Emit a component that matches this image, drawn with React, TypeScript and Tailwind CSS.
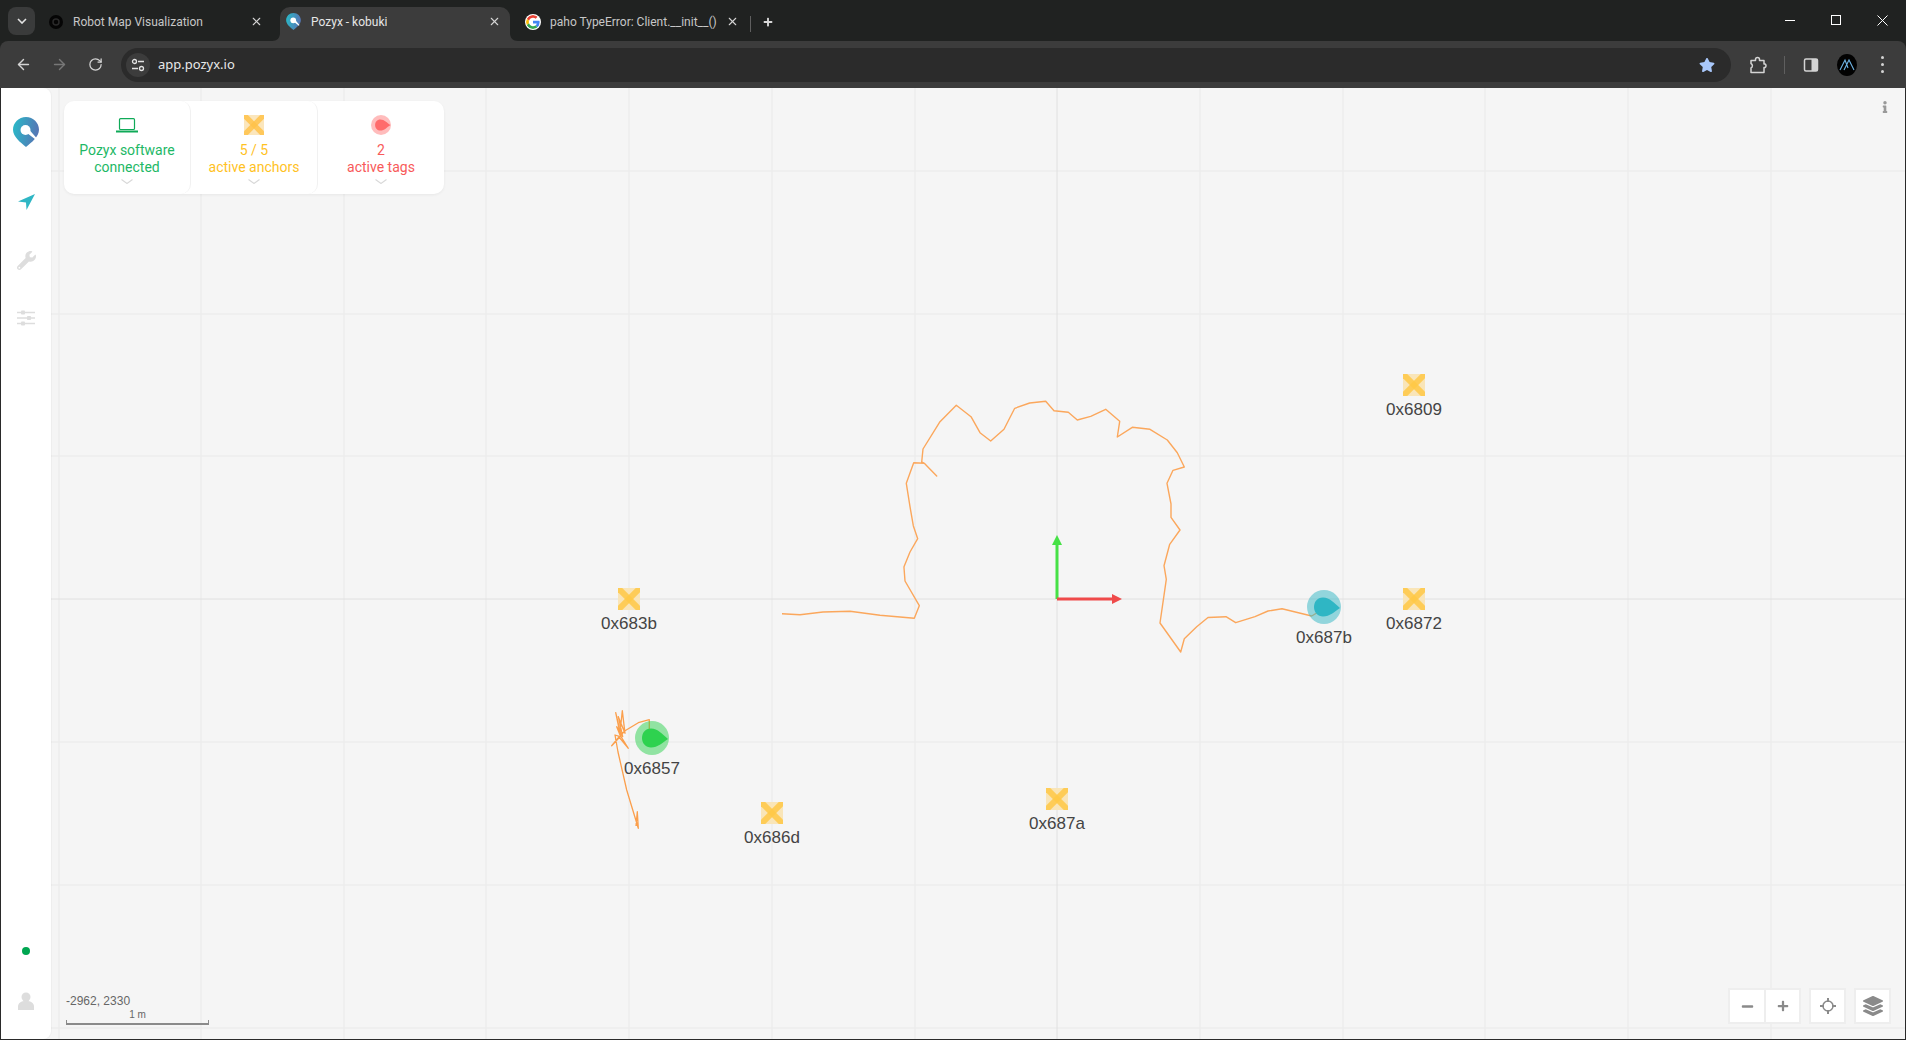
import React from 'react';
import { ArrowLeft, ArrowRight, RotateCw, X } from 'lucide-react';
import { FaInfo, FaLayerGroup, FaMinus, FaPlus, FaStar, FaWrench } from 'react-icons/fa';

const GRID_X = [59, 201, 344, 486, 629, 772, 915, 1200, 1343, 1485, 1628, 1771];
const GRID_Y = [171, 314, 456, 742, 885, 1028];

const ANCHORS = [
  { id: '0x6809', x: 1414, y: 385 },
  { id: '0x6872', x: 1414, y: 599 },
  { id: '0x683b', x: 629, y: 599 },
  { id: '0x686d', x: 772, y: 813 },
  { id: '0x687a', x: 1057, y: 799 },
];

const TAGS = [
  { id: '0x687b', x: 1324, y: 607, color: '#2fb6c4' },
  { id: '0x6857', x: 652, y: 738, color: '#2ed24f' },
];

const TRAIL_A =
  '782,613.7 800,614.7 823,612 850,611.3 880,615.3 914.3,618.3 919.3,605.7 905,581 904,567.7 904,566.7 910,552 917.7,538.7 913.3,525.7 910,506.7 906.3,483.3 913.7,462.7 924.3,463.3 936.7,476 924.3,463.3 921.7,462 923,449 940,421.7 956.3,405.3 971,416.7 980,432.7 990.7,441 1004,429.3 1014.7,408.3 1029.7,403 1045.7,401.3 1054,410.7 1068.3,412.3 1077.3,420 1090.7,416.3 1105.7,409.3 1119.7,421.3 1117.3,437 1132.3,427.3 1150,429.3 1167.3,440 1177.3,452.7 1184.3,467 1173,470.3 1167,483.3 1171,504 1171,517.3 1180,530 1169.7,544.3 1164,565.7 1166.3,579.3 1160,623 1180.7,652 1184.3,638.7 1196.7,626.7 1208,617.5 1226,616.7 1235.7,622.7 1255,616.7 1268,611 1282,608.7 1311.7,616 1316.7,613';

const TRAIL_B =
  '649.3,730 649.3,719.7 638.3,722.7 625,730.7 621,735 615.7,712.7 620,733.3 622.3,710.7 625,733.3 618.3,716.7 622.7,736.7 616.7,726.7 620,735 628.3,748.3 619,737 611.7,745.7 620,736.7 615,735 618,752 626.7,790 638.3,828.3 637.3,811.7 636,826';

function PozyxLogo({ className }: { className?: string }) {
  return (
    <svg viewBox="0 0 26 30" className={className}>
      <defs>
        <linearGradient id="pozyxGrad" x1="0" y1="0" x2="1" y2="0.2">
          <stop offset="0" stopColor="#27bcc9" />
          <stop offset="1" stopColor="#5577b5" />
        </linearGradient>
      </defs>
      <path d="M13 0C5.8 0 0 5.7 0 12.8c0 7 7.500 12.700 13 17.200 5.500-4.500 13-10.200 13-17.200C26 5.700 20.200 0 13 0Z" fill="url(#pozyxGrad)" />
      <circle cx="12.500" cy="13" r="5" fill="#fff" />
      <path d="M14 16l8.500 6.500 1-1.500-7-8Z" fill="#fff" />
    </svg>
  );
}

function GoogleIcon() {
  return (
    <svg viewBox="0 0 48 48" className="h-4 w-4 rounded-full bg-white p-[1px]">
      <path fill="#EA4335" d="M24 9.5c3.5 0 6.700 1.300 9.100 3.500l6.800-6.800C35.800 2.400 30.200 0 24 0 14.600 0 6.500 5.400 2.600 13.200l7.900 6.200C12.400 13.600 17.700 9.500 24 9.500z" />
      <path fill="#4285F4" d="M46.900 24.500c0-1.600-.1-3.100-.4-4.500H24v9h12.900c-.6 3-2.200 5.500-4.700 7.200l7.700 6c4.500-4.200 7-10.300 7-17.700z" />
      <path fill="#FBBC05" d="M10.500 28.600c-.5-1.400-.8-3-.8-4.600s.3-3.200.8-4.600l-7.900-6.200C.9 16.500 0 20.100 0 24s.9 7.500 2.600 10.800l7.900-6.200z" />
      <path fill="#34A853" d="M24 48c6.500 0 11.900-2.100 15.900-5.800l-7.700-6c-2.200 1.400-4.900 2.300-8.200 2.300-6.300 0-11.600-4.100-13.500-9.900l-7.900 6.200C6.500 42.600 14.600 48 24 48z" />
    </svg>
  );
}

function Tab({
  title,
  icon,
  className,
  textClass,
}: {
  title: string;
  icon: React.ReactNode;
  className: string;
  textClass: string;
}) {
  return (
    <div className={`flex h-[34px] shrink-0 items-center pb-[5px] font-['Roboto',sans-serif] text-[12px] ${className}`}>
      {icon}
      <span className={`overflow-hidden whitespace-nowrap ${textClass}`}>{title}</span>
      <X size={13} strokeWidth={2} className="ml-auto text-[#d5d5d5]" />
    </div>
  );
}

function ChromeBar() {
  return (
    <div className="shrink-0 bg-[#202221]">
      <div className="flex h-[41px] items-end pl-2">
        <div className="mb-[6px] flex h-[28px] w-[27px] items-center justify-center rounded-lg bg-[#3a3b3b]">
          <svg viewBox="0 0 10 6" className="h-[6px] w-[10px]">
            <path d="M1 1l4 4 4-4" fill="none" stroke="#e3e3e3" strokeWidth="1.600" />
          </svg>
        </div>
        <Tab
          title="Robot Map Visualization"
          className="w-[245px] pl-[13px] pr-[17px]"
          textClass="ml-[9px] text-[#c7c7c7]"
          icon={
            <svg viewBox="0 0 16 16" className="h-4 w-4">
              <circle cx="8" cy="8" r="7" fill="#050505" />
              <circle cx="8" cy="8" r="3" fill="none" stroke="#2a2a2a" strokeWidth="1.500" />
            </svg>
          }
        />
        <div className="relative">
          <svg viewBox="0 0 8 8" className="absolute bottom-0 -left-2 h-2 w-2">
            <path d="M8 0v8H0c5 0 8-3 8-8Z" fill="#3c3c3c" />
          </svg>
          <svg viewBox="0 0 8 8" className="absolute bottom-0 -right-2 h-2 w-2">
            <path d="M0 0v8h8C3 8 0 5 0 0Z" fill="#3c3c3c" />
          </svg>
          <Tab
            title="Pozyx - kobuki"
            className="w-[230px] rounded-t-[10px] bg-[#3c3c3c] pl-[6px] pr-[9px]"
            textClass="ml-[10px] text-[#e6e6e6]"
            icon={<PozyxLogo className="h-[17px] w-[15px]" />}
          />
        </div>
        <Tab
          title="paho TypeError: Client.__init__()"
          className="w-[240px] pl-[15px] pr-[11px]"
          textClass="ml-[9px] text-[#c7c7c7]"
          icon={<GoogleIcon />}
        />
        <div className="mb-[9px] h-[16px] w-px bg-[#5f5f5f]" />
        <div className="mb-[12px] ml-[11px] flex h-[14px] w-[12px] items-center justify-center">
          <FaPlus size={10} className="text-[#d8d8d8]" />
        </div>
        <div className="ml-auto flex h-[41px] items-start pr-px text-white">
          <div className="flex h-[40px] w-[46px] items-center justify-center">
            <div className="h-px w-[10px] bg-white" />
          </div>
          <div className="flex h-[40px] w-[46px] items-center justify-center">
            <div className="h-[10px] w-[10px] border border-white" />
          </div>
          <div className="flex h-[40px] w-[46px] items-center justify-center">
            <svg viewBox="0 0 11 11" className="h-[11px] w-[11px]">
              <path d="M.5.5l10 10M10.500.5l-10 10" stroke="#fff" strokeWidth="1" />
            </svg>
          </div>
        </div>
      </div>
      <div className="flex h-[47px] items-center rounded-t-[8px] bg-[#3c3c3c] pl-[5px] pr-[21px]">
        <div className="flex w-[36px] justify-center">
          <ArrowLeft size={17} className="text-[#d4d4d4]" />
        </div>
        <div className="flex w-[36px] justify-center">
          <ArrowRight size={17} className="text-[#777]" />
        </div>
        <div className="flex w-[36px] justify-center">
          <RotateCw size={15} className="text-[#d4d4d4]" />
        </div>
        <div className="ml-2 flex h-[34px] flex-1 items-center rounded-full bg-[#2b2b2b] pl-[5px] pr-4">
          <div className="flex h-[24px] w-[24px] items-center justify-center rounded-full bg-[#3c3c3c]">
            <svg viewBox="0 0 14 14" className="h-[14px] w-[14px]">
              <circle cx="3.500" cy="3.500" r="2" fill="none" stroke="#e3e3e3" strokeWidth="1.300" />
              <path d="M7 3.500h6M1 10.500h6" stroke="#e3e3e3" strokeWidth="1.300" />
              <circle cx="10.500" cy="10.500" r="2" fill="none" stroke="#e3e3e3" strokeWidth="1.300" />
            </svg>
          </div>
          <span className="ml-2 font-['Noto_Sans',sans-serif] text-[13px] text-[#e8e8e8]">app.pozyx.io</span>
          <FaStar size={16} className="ml-auto text-[#a8c7fa]" />
        </div>
        <div className="flex w-[53px] justify-center">
          <svg viewBox="0 0 18 18" className="h-[18px] w-[18px]">
            <path
              d="M2 4.500h4.500V3.500a2 2 0 0 1 4 0v1H15v3.500h1a2 2 0 0 1 0 3.500h-1v5H2v-4.500a2.500 2.500 0 0 0 0-4.500Z"
              fill="none"
              stroke="#d4d4d4"
              strokeWidth="1.500"
              strokeLinejoin="round"
            />
          </svg>
        </div>
        <div className="h-[18px] w-px bg-[#5f5f5f]" />
        <div className="flex w-[52px] justify-center">
          <svg viewBox="0 0 16 16" className="h-4 w-4">
            <rect x="1.500" y="2" width="13" height="12" rx="1.500" fill="none" stroke="#d4d4d4" strokeWidth="1.500" />
            <rect x="8.500" y="2" width="6" height="12" fill="#d4d4d4" />
          </svg>
        </div>
        <svg viewBox="0 0 20 22" className="h-[22px] w-[20px]">
          <ellipse cx="10" cy="11" rx="10" ry="11" fill="#020202" />
          <path d="M3 16L8 6l3 8M7 16l5-10 5 10" fill="none" stroke="#6fb6e8" strokeWidth="1.100" />
        </svg>
        <div className="ml-6 flex w-1 flex-col gap-[4px]">
          <div className="h-[3px] w-[3px] rounded-full bg-[#d4d4d4]" />
          <div className="h-[3px] w-[3px] rounded-full bg-[#d4d4d4]" />
          <div className="h-[3px] w-[3px] rounded-full bg-[#d4d4d4]" />
        </div>
      </div>
    </div>
  );
}

function Sidebar() {
  return (
    <div className="z-10 flex w-[50px] shrink-0 flex-col items-center rounded-r-lg bg-white pb-[29px] pt-[29px] shadow-[1px_0_1px_rgba(0,0,0,0.03)]">
      <PozyxLogo className="mb-[26px] h-[30px] w-[26px]" />
      <div className="flex h-[58px] items-center">
        <svg viewBox="0 0 17 16" className="h-4 w-[17px]">
          <path d="M17 0L8.500 16 8 8.500 0 7.500Z" fill="#2fb6c4" />
        </svg>
      </div>
      <div className="flex h-[58px] items-center">
        <FaWrench size={19} className="text-[#dddddd]" />
      </div>
      <div className="flex h-[58px] items-center">
        <svg viewBox="0 0 18 16" className="h-4 w-[18px]">
          <path d="M0 2.500h18M0 8h18M0 13.500h18" stroke="#dddddd" strokeWidth="1.400" />
          <rect x="4" y="0.500" width="4" height="4" rx="0.800" fill="#dddddd" />
          <rect x="10" y="6" width="4" height="4" rx="0.800" fill="#dddddd" />
          <rect x="4" y="11.500" width="4" height="4" rx="0.800" fill="#dddddd" />
        </svg>
      </div>
      <div className="mt-auto h-2 w-2 rounded-full bg-[#00a651]" />
      <svg viewBox="0 0 16 18" className="mt-[37px] h-[18px] w-4">
        <circle cx="8" cy="5" r="4.500" fill="#dddddd" />
        <path d="M0 18v-3.500C0 11 3 9 8 9s8 2 8 5.500V18Z" fill="#dddddd" />
      </svg>
    </div>
  );
}

function StatusItem({ icon, lines, textClass }: { icon: React.ReactNode; lines: string[]; textClass: string }) {
  return (
    <div className="flex flex-1 flex-col items-center rounded-[10px] border-r border-[#f1f1f1] pt-[14px] last:border-r-0">
      <div className="flex h-5 items-center justify-center">{icon}</div>
      <div className={`mt-[7px] text-center font-['Roboto',sans-serif] text-[14px] leading-[17px] ${textClass}`}>
        {lines.map((line) => (
          <div key={line}>{line}</div>
        ))}
      </div>
      <svg viewBox="0 0 12 5" className="mt-[3px] h-[5px] w-3">
        <path d="M.5.500L6 4.500 11.500.5" fill="none" stroke="#d8d8d8" strokeWidth="1.100" />
      </svg>
    </div>
  );
}

function StatusPanel() {
  return (
    <div className="absolute left-[13px] top-[13px] flex h-[93px] w-[380px] rounded-[10px] bg-white shadow-[0_1px_3px_rgba(0,0,0,0.06)]">
      <StatusItem
        lines={['Pozyx software', 'connected']}
        textClass="text-[#1db866]"
        icon={
          <svg viewBox="0 0 22 15" className="h-[15px] w-[22px]">
            <rect x="3.500" y="0.700" width="15" height="10.800" rx="1" fill="none" stroke="#0faa58" strokeWidth="1.200" />
            <rect x="0" y="12.500" width="22" height="2" fill="#0faa58" />
          </svg>
        }
      />
      <StatusItem
        lines={['5 / 5', 'active anchors']}
        textClass="text-[#ffc21f]"
        icon={
          <svg viewBox="0 0 22 22" className="h-5 w-5">
            <rect width="22" height="22" fill="#fbe6bc" />
            <line x1="0" y1="0" x2="22" y2="22" stroke="#ffc24a" strokeOpacity="0.85" strokeWidth="6" />
            <line x1="22" y1="0" x2="0" y2="22" stroke="#ffc24a" strokeOpacity="0.85" strokeWidth="6" />
          </svg>
        }
      />
      <StatusItem
        lines={['2', 'active tags']}
        textClass="text-[#f85a5a]"
        icon={
          <svg viewBox="-17 -17 34 34" className="h-5 w-5">
            <circle r="17" fill="#ff6b6b" fillOpacity="0.45" />
            <path d="M16 0C10-4 6-9.500-1-9.500-7-9.500-10-5-10 0-10 5.500-6 9.500-1 9.500 6 9.500 10 4 16 0Z" fill="#ff6b6b" />
          </svg>
        }
      />
    </div>
  );
}

function MapLayer() {
  return (
    <svg viewBox="51 88 1854 951" className="absolute inset-0 h-full w-full">
      {GRID_X.map((x) => (
        <line key={x} x1={x} x2={x} y1={88} y2={1040} stroke="#ececec" strokeWidth="1.500" />
      ))}
      {GRID_Y.map((y) => (
        <line key={y} x1={51} x2={1906} y1={y} y2={y} stroke="#ececec" strokeWidth="1.500" />
      ))}
      <line x1={1057} x2={1057} y1={88} y2={1040} stroke="#e0e0e0" strokeWidth="1" />
      <line x1={51} x2={1906} y1={599} y2={599} stroke="#e0e0e0" strokeWidth="1" />

      <polyline points={TRAIL_A} fill="none" stroke="#fba75c" strokeWidth="1.400" strokeLinejoin="round" />
      <polyline points={TRAIL_B} fill="none" stroke="#fb9f4c" strokeWidth="1.300" strokeLinejoin="round" />

      <rect x="1055.500" y="544" width="3" height="55" fill="#46e146" />
      <path d="M1057 535l5 10h-10Z" fill="#46e146" />
      <rect x="1057" y="597.500" width="56" height="3" fill="#ef4a4a" />
      <path d="M1122 599l-10 5v-10Z" fill="#ef4a4a" />

      {ANCHORS.map((a) => (
        <svg key={a.id} x={a.x - 11} y={a.y - 11} width="22" height="22" viewBox="0 0 22 22">
          <rect width="22" height="22" fill="#f9e5b8" />
          <line x1="0" y1="0" x2="22" y2="22" stroke="#ffc845" strokeOpacity="0.85" strokeWidth="6" />
          <line x1="22" y1="0" x2="0" y2="22" stroke="#ffc845" strokeOpacity="0.85" strokeWidth="6" />
        </svg>
      ))}
      {TAGS.map((t) => (
        <g key={t.id} transform={`translate(${t.x} ${t.y})`}>
          <circle r="17" fill={t.color} fillOpacity="0.5" />
          <path d="M16 1C10-4 6-9.500-1-9.500-7-9.500-10-5-10 0-10 5.500-6 9.500-1 9.500 6 9.500 10 5 16 1Z" fill={t.color} />
        </g>
      ))}
    </svg>
  );
}

function MarkerLabel({ text, x, y }: { text: string; x: number; y: number }) {
  return (
    <div
      className="absolute -translate-x-1/2 -translate-y-1/2 whitespace-nowrap font-['Liberation_Sans',sans-serif] text-[17px] text-[#444]"
      style={{ left: x - 51, top: y - 88 }}
    >
      {text}
    </div>
  );
}

function MapButton({ children, className }: { children: React.ReactNode; className?: string }) {
  return (
    <div className={`flex h-[36px] w-[37px] items-center justify-center border-2 border-[#eeeeee] bg-white text-[#8a8a8a] ${className ?? ''}`}>
      {children}
    </div>
  );
}

function MapView() {
  return (
    <div className="relative flex-1 overflow-hidden bg-[#f5f5f5]">
      <MapLayer />
      {ANCHORS.map((a) => (
        <MarkerLabel key={a.id} text={a.id} x={a.x} y={a.y + 25} />
      ))}
      {TAGS.map((t) => (
        <MarkerLabel key={t.id} text={t.id} x={t.x} y={t.y + 31} />
      ))}
      <StatusPanel />
      <FaInfo size={12} className="absolute right-[14px] top-[13px] text-[#999]" />
      <div className="absolute bottom-[14px] left-[15px] font-['Liberation_Sans',sans-serif] text-[#666]">
        <div className="text-[12px] leading-[14px]">-2962, 2330</div>
        <div className="mt-[2px] w-[143px] text-center text-[10px] leading-[10px]">1 m</div>
        <div className="h-[5px] w-[143px] border-x border-b-2 border-[#8a8a8a]" />
      </div>
      <div className="absolute bottom-[15px] right-[14px] flex">
        <MapButton className="border-r-0">
          <FaMinus size={13} />
        </MapButton>
        <MapButton className="-ml-px">
          <FaPlus size={12} />
        </MapButton>
        <MapButton className="ml-2">
          <svg viewBox="0 0 16 16" className="h-4 w-4">
            <circle cx="8" cy="8" r="5" fill="none" stroke="#8a8a8a" strokeWidth="1.500" />
            <path d="M8 0v4M8 12v4M0 8h4M12 8h4" stroke="#8a8a8a" strokeWidth="2" />
          </svg>
        </MapButton>
        <MapButton className="ml-2">
          <FaLayerGroup size={20} />
        </MapButton>
      </div>
    </div>
  );
}

export default function App() {
  return (
    <div className="flex h-[1040px] w-[1906px] flex-col overflow-hidden bg-[#202221]">
      <ChromeBar />
      <div className="flex min-h-0 flex-1 border-x border-b border-[#2a2a2a] bg-[#f5f5f5]">
        <Sidebar />
        <MapView />
      </div>
    </div>
  );
}
